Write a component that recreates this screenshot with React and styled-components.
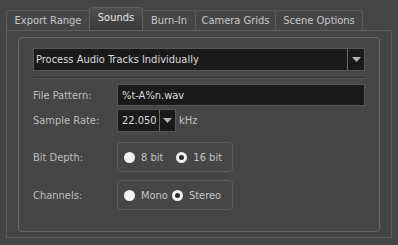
import React from "react";
import styled, { createGlobalStyle } from "styled-components";

const Global = createGlobalStyle`
  html, body { margin: 0; padding: 0; background: #464646; }
  body { font-family: "DejaVu Sans Condensed", "DejaVu Sans", sans-serif; font-size: 11px; color: #c4c4c4; }
`;

const Root = styled.div`
  width: 398px;
  height: 245px;
  box-sizing: border-box;
  padding: 7px 6px 0 6px;
  background: #464646;
`;

const TabBar = styled.div`
  display: flex;
  align-items: flex-end;
  height: 23px;
`;

const Tab = styled.div`
  box-sizing: border-box;
  width: ${(p) => p.$w}px;
  height: ${(p) => (p.$active ? 23 : 20)}px;
  margin-left: -1px;
  &:first-child { margin-left: 0; }
  border: 1px solid #5c5c5c;
  border-bottom: none;
  border-radius: 3px 3px 0 0;
  display: flex;
  align-items: center;
  justify-content: center;
  padding-bottom: ${(p) => (p.$active ? 3 : 0)}px;
  color: ${(p) => (p.$active ? "#e8e8e8" : "#c8c8c8")};
  background: ${(p) =>
    p.$active ? "linear-gradient(#505050, #3a3a3a)" : "#464646"};
  position: relative;
  z-index: ${(p) => (p.$active ? 1 : 0)};
`;

const Pane = styled.div`
  box-sizing: border-box;
  width: 386px;
  height: 208px;
  border: 1px solid #5e5e5e;
  padding: 6px 11px 5px 11px;
`;

const Group = styled.div`
  box-sizing: border-box;
  height: 100%;
  border: 1px solid #696969;
  border-radius: 4px;
  padding: 10px 14px 0 14px;
  display: flex;
  flex-direction: column;
`;

const Combo = styled.div`
  display: flex;
  height: 23px;
  box-sizing: border-box;
  border: 1px solid #575757;
  background: #1a1a1a;
`;

const ComboText = styled.div`
  flex: 1;
  display: flex;
  align-items: center;
  padding-left: 2px;
  color: #dcdcdc;
`;

const DropBtn = styled.div`
  box-sizing: border-box;
  width: ${(p) => p.$w}px;
  border-left: 1px solid #6a6a6a;
  display: flex;
  align-items: center;
  justify-content: center;
`;

const Separator = styled.div`
  margin-top: 6px;
  height: 1px;
  background: #333333;
  border-bottom: 1px solid #525252;
`;

const Row = styled.div`
  display: flex;
  align-items: center;
  margin-top: ${(p) => p.$mt}px;
`;

const Label = styled.div`
  width: 84px;
  color: #bcbcbc;
`;

const Field = styled.div`
  box-sizing: border-box;
  height: ${(p) => p.$h}px;
  flex: 1;
  background: #1a1a1a;
  border: 1px solid #575757;
  display: flex;
  align-items: center;
  padding-left: 4px;
  color: #dcdcdc;
`;

const SpinCombo = styled.div`
  display: flex;
  height: 23px;
  box-sizing: border-box;
  border: 1px solid #575757;
  background: #1a1a1a;
`;

const SpinText = styled.div`
  width: 41px;
  display: flex;
  align-items: center;
  padding-left: 4px;
  box-sizing: border-box;
  color: #dcdcdc;
`;

const Unit = styled.div`
  margin-left: 3px;
  color: #c4c4c4;
`;

const RadioBox = styled.div`
  box-sizing: border-box;
  width: 116px;
  height: 30px;
  border: 1px solid #5e5e5e;
  border-radius: 4px;
  display: flex;
  align-items: center;
  padding-left: 6px;
`;

const RadioItem = styled.div`
  display: flex;
  align-items: center;
  margin-right: ${(p) => p.$mr}px;
`;

const Dot = styled.span`
  box-sizing: border-box;
  width: 11px;
  height: 11px;
  border-radius: 50%;
  background: ${(p) => (p.$checked ? "#2a2a2a" : "#f2f2f2")};
  border: ${(p) => (p.$checked ? "3px solid #f2f2f2" : "none")};
  margin-right: 6px;
`;

const RadioText = styled.span`
  color: #c4c4c4;
`;

const Arrow = () => (
  <svg width="9" height="5" viewBox="0 0 9 5">
    <path d="M0 0h9L4.5 5z" fill="#b4b4b4" />
  </svg>
);

export default function App() {
  const tabs = [
    ["Export Range", 84],
    ["Sounds", 54, true],
    ["Burn-In", 54],
    ["Camera Grids", 81],
    ["Scene Options", 88],
  ];
  return (
    <>
      <Global />
      <Root>
        <TabBar>
          {tabs.map(([t, w, a]) => (
            <Tab key={t} $w={w} $active={a}>
              {t}
            </Tab>
          ))}
        </TabBar>
        <Pane>
          <Group>
            <Combo>
              <ComboText>Process Audio Tracks Individually</ComboText>
              <DropBtn $w={17}>
                <Arrow />
              </DropBtn>
            </Combo>
            <Separator />
            <Row $mt={5}>
              <Label>File Pattern:</Label>
              <Field $h={22}>%t-A%n.wav</Field>
            </Row>
            <Row $mt={3}>
              <Label>Sample Rate:</Label>
              <SpinCombo>
                <SpinText>22.050</SpinText>
                <DropBtn $w={16}>
                  <Arrow />
                </DropBtn>
              </SpinCombo>
              <Unit>kHz</Unit>
            </Row>
            <Row $mt={10}>
              <Label>Bit Depth:</Label>
              <RadioBox>
                <RadioItem $mr={13}>
                  <Dot />
                  <RadioText>8 bit</RadioText>
                </RadioItem>
                <RadioItem $mr={0}>
                  <Dot $checked />
                  <RadioText>16 bit</RadioText>
                </RadioItem>
              </RadioBox>
            </Row>
            <Row $mt={8}>
              <Label>Channels:</Label>
              <RadioBox>
                <RadioItem $mr={4}>
                  <Dot />
                  <RadioText>Mono</RadioText>
                </RadioItem>
                <RadioItem $mr={0}>
                  <Dot $checked />
                  <RadioText>Stereo</RadioText>
                </RadioItem>
              </RadioBox>
            </Row>
          </Group>
        </Pane>
      </Root>
    </>
  );
}
